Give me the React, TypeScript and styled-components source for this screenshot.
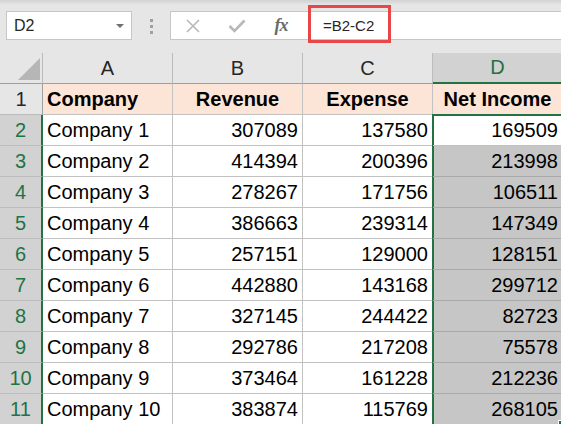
import styled, { createGlobalStyle } from 'styled-components';

const GlobalStyle = createGlobalStyle`
  html, body {
    margin: 0;
    padding: 0;
    background: #ffffff;
  }
`;

const green = '#217346';
const gridLine = '#c2c2c2';

type Align = 'left' | 'center' | 'right';
type Tone = 'plain' | 'head' | 'picked' | 'active';

const rows: [string, number, number][] = [
  ['Company 1', 307089, 137580],
  ['Company 2', 414394, 200396],
  ['Company 3', 278267, 171756],
  ['Company 4', 386663, 239314],
  ['Company 5', 257151, 129000],
  ['Company 6', 442880, 143168],
  ['Company 7', 327145, 244422],
  ['Company 8', 292786, 217208],
  ['Company 9', 373464, 161228],
  ['Company 10', 383874, 115769],
];

const Window = styled.div`
  width: 561px;
  height: 424px;
  overflow: hidden;
  font-family: 'Liberation Sans', Arial, sans-serif;
  color: #000;
`;

const TopBar = styled.div`
  display: flex;
  align-items: flex-start;
  height: 53px;
  box-sizing: border-box;
  padding: 11px 0 0 6px;
  background: linear-gradient(#d2d2d2, #e6e6e6 5px);
`;

const NameBox = styled.div`
  display: flex;
  align-items: center;
  justify-content: space-between;
  width: 126px;
  height: 29px;
  box-sizing: border-box;
  padding: 0 7px 0 7px;
  background: #fff;
  border: 1px solid #c6c6c6;
  font-size: 16px;
  color: #262626;
`;

const Caret = styled.span`
  width: 0;
  height: 0;
  margin-top: 1px;
  border-left: 4px solid transparent;
  border-right: 4px solid transparent;
  border-top: 4px solid #6e6e6e;
`;

const Grip = styled.div`
  display: flex;
  flex-direction: column;
  gap: 3px;
  margin: 8px 17px 0 18px;

  span {
    width: 3px;
    height: 3px;
    background: #a0a0a0;
  }
`;

const FormulaBar = styled.div`
  display: flex;
  align-items: center;
  flex: 1;
  height: 29px;
  box-sizing: border-box;
  background: #fff;
  border: 1px solid #c6c6c6;
  border-right: none;
`;

const BarButton = styled.div`
  display: flex;
  align-items: center;
  justify-content: center;
  width: 44px;
  height: 100%;
`;

const Fx = styled.span`
  font-family: 'Liberation Serif', 'Times New Roman', serif;
  font-style: italic;
  font-weight: 700;
  font-size: 18px;
  color: #6a6a6a;
  letter-spacing: -1px;
`;

const FormulaText = styled.span`
  position: relative;
  margin-left: 20px;
  font-size: 15px;
  color: #262626;
`;

const Highlight = styled.span`
  position: absolute;
  left: -15px;
  right: -17px;
  top: -12px;
  bottom: -9px;
  border: 3px solid #e8474a;
`;

const Sheet = styled.div`
  display: grid;
  grid-template-columns: 43px repeat(4, 130px);
  grid-auto-rows: 31px;
  font-size: 20px;
`;

const Corner = styled.div`
  display: flex;
  align-items: flex-end;
  justify-content: flex-end;
  padding: 0 2px 3px 0;
  background: #e6e6e6;
  border-right: 1px solid #bcbcbc;
  border-bottom: 1px solid #9f9f9f;

  span {
    width: 0;
    height: 0;
    border-left: 22px solid transparent;
    border-bottom: 22px solid #b6b6b6;
  }
`;

const ColHead = styled.div<{ $picked?: boolean }>`
  display: flex;
  align-items: center;
  justify-content: center;
  background: ${p => (p.$picked ? '#d2d2d2' : '#e6e6e6')};
  color: ${p => (p.$picked ? green : '#262626')};
  border-right: 1px solid #bcbcbc;
  border-bottom: ${p => (p.$picked ? `2px solid ${green}` : '1px solid #9f9f9f')};
`;

const RowHead = styled.div<{ $picked?: boolean }>`
  display: flex;
  align-items: center;
  justify-content: center;
  background: ${p => (p.$picked ? '#d2d2d2' : '#e6e6e6')};
  color: ${p => (p.$picked ? green : '#262626')};
  border-right: ${p => (p.$picked ? `2px solid ${green}` : '1px solid #9f9f9f')};
  border-bottom: 1px solid #bcbcbc;
`;

const toneBg: Record<Tone, string> = {
  plain: '#ffffff',
  head: '#fce4d6',
  picked: '#c6c6c6',
  active: '#ffffff',
};

const Cell = styled.div<{ $tone?: Tone; $align?: Align; $bold?: boolean }>`
  position: relative;
  display: flex;
  align-items: center;
  justify-content: ${p =>
    p.$align === 'right' ? 'flex-end' : p.$align === 'center' ? 'center' : 'flex-start'};
  padding: 0 4px;
  white-space: nowrap;
  font-weight: ${p => (p.$bold ? 700 : 400)};
  background: ${p => toneBg[p.$tone ?? 'plain']};
  border-right: 1px solid ${gridLine};
  border-bottom: 1px solid ${p => (p.$tone === 'picked' ? '#a9a9a9' : gridLine)};
  box-shadow: ${p =>
    p.$tone === 'active'
      ? `-1px 0 0 ${green}, inset 1px 0 0 ${green}, 0 -1px 0 ${green}, inset 0 1px 0 ${green}, -1px -1px 0 ${green}`
      : p.$tone === 'picked'
        ? `-1px 0 0 ${green}, inset 1px 0 0 ${green}`
        : 'none'};
`;

const FillHandle = styled.span`
  position: absolute;
  right: -4px;
  bottom: -4px;
  width: 6px;
  height: 6px;
  background: ${green};
  border: 1px solid #fff;
`;

function CrossIcon() {
  return (
    <svg width="16" height="16" viewBox="0 0 16 16">
      <path d="M2 2 L14 14 M14 2 L2 14" stroke="#b8b8b8" strokeWidth="1.6" fill="none" />
    </svg>
  );
}

function CheckIcon() {
  return (
    <svg width="18" height="14" viewBox="0 0 18 14">
      <path d="M1.5 7 L6.5 12 L16.5 1.5" stroke="#b8b8b8" strokeWidth="2.6" fill="none" />
    </svg>
  );
}

export default function App() {
  return (
    <Window>
      <GlobalStyle />
      <TopBar>
        <NameBox>
          D2
          <Caret />
        </NameBox>
        <Grip>
          <span />
          <span />
          <span />
        </Grip>
        <FormulaBar>
          <BarButton>
            <CrossIcon />
          </BarButton>
          <BarButton>
            <CheckIcon />
          </BarButton>
          <BarButton>
            <Fx>fx</Fx>
          </BarButton>
          <FormulaText>
            =B2-C2
            <Highlight />
          </FormulaText>
        </FormulaBar>
      </TopBar>

      <Sheet>
        <Corner>
          <span />
        </Corner>
        <ColHead>A</ColHead>
        <ColHead>B</ColHead>
        <ColHead>C</ColHead>
        <ColHead $picked>D</ColHead>

        <RowHead>1</RowHead>
        <Cell $tone="head" $bold>Company</Cell>
        <Cell $tone="head" $bold $align="center">Revenue</Cell>
        <Cell $tone="head" $bold $align="center">Expense</Cell>
        <Cell $tone="head" $bold $align="center">Net Income</Cell>

        {rows.map(([name, revenue, expense], index) => (
          <RowItem
            key={name}
            rowNumber={index + 2}
            name={name}
            revenue={revenue}
            expense={expense}
            last={index === rows.length - 1}
          />
        ))}
      </Sheet>
    </Window>
  );
}

function RowItem({
  rowNumber,
  name,
  revenue,
  expense,
  last,
}: {
  rowNumber: number;
  name: string;
  revenue: number;
  expense: number;
  last: boolean;
}) {
  return (
    <>
      <RowHead $picked>{rowNumber}</RowHead>
      <Cell>{name}</Cell>
      <Cell $align="right">{revenue}</Cell>
      <Cell $align="right">{expense}</Cell>
      <Cell $align="right" $tone={rowNumber === 2 ? 'active' : 'picked'}>
        {revenue - expense}
        {last && <FillHandle />}
      </Cell>
    </>
  );
}
